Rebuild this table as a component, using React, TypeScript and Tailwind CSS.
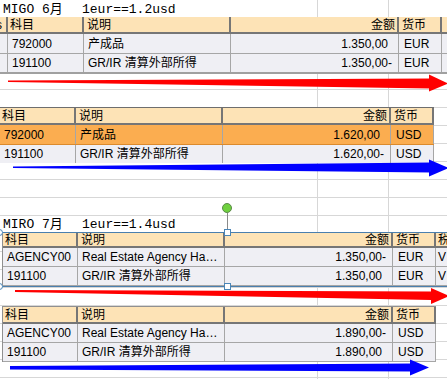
import React from 'react';

type Row = {
  acct: string;
  text: string;
  amount: string;
  neg?: boolean;
  cur: string;
  tax?: string;
  hl?: boolean;
};

const sans = "font-['Liberation_Sans','Noto_Sans_CJK_SC',sans-serif]";
const mono = "font-['Liberation_Mono','Noto_Sans_CJK_SC',monospace]";

const headDiv = 'shrink-0 border-r-2 border-[#767676] flex items-center';
const bodyDiv = 'shrink-0 border-r border-[#a6a6a6] flex items-center';

function Title({ left, right }: { left: string; right: string }) {
  return (
    <div className={`flex h-[17px] pt-[2px] pl-[3px] text-[13px] leading-[15px] text-black ${mono}`}>
      <span className="w-[79px] shrink-0 whitespace-pre">{left}</span>
      <span>{right}</span>
    </div>
  );
}

function Header({
  h,
  first,
  lead,
  tail,
}: {
  h: string;
  first: string;
  lead?: React.ReactNode;
  tail?: React.ReactNode;
}) {
  return (
    <div className={`flex ${h} bg-[#fde3b6] border-b-2 border-[#767676]`}>
      {lead}
      <div className={`${headDiv} ${first} pl-[2px]`}>科目</div>
      <div className={`${headDiv} w-[147px] pl-[3px]`}>说明</div>
      <div className={`${headDiv} w-[168px] justify-end pr-[2px]`}>金额</div>
      <div className={`${headDiv} w-[43px] pl-[3px]`}>货币</div>
      {tail}
    </div>
  );
}

function BodyRow({
  row,
  h,
  first,
  last,
  lead,
  tail,
}: {
  row: Row;
  h: string;
  first: string;
  last?: string;
  lead?: boolean;
  tail?: 'fill' | 'tax' | 'none';
}) {
  const bg = row.hl ? 'bg-[#fbad50]' : 'bg-[#efeff4]';
  const line = row.hl ? 'border-[#dc8a2c]' : 'border-[#a6a6a6]';
  return (
    <div className={`flex ${h} ${last ?? `border-b ${line}`}`}>
      {lead && <div className={`${bodyDiv} w-[8px] ${bg}`} />}
      <div className={`${bodyDiv} ${first} pl-[4px] ${bg}`}>{row.acct}</div>
      <div className={`${bodyDiv} w-[147px] pl-[4px] whitespace-nowrap overflow-hidden ${bg}`}>
        {row.text}
      </div>
      <div className={`${bodyDiv} w-[168px] justify-end pr-[6px] ${bg}`}>
        <span>{row.amount}</span>
        <span className="w-[4px]">{row.neg ? '-' : ''}</span>
      </div>
      <div className={`${bodyDiv} w-[43px] pl-[5px] ${bg}`}>{row.cur}</div>
      {tail === 'fill' && <div className={`flex-1 ${bg}`} />}
      {tail === 'tax' && <div className={`flex-1 flex items-center pl-[2px] ${bg}`}>{row.tax}</div>}
    </div>
  );
}

function Arrow({
  h,
  body,
  head,
  color,
}: {
  h: string;
  body: string;
  head: string;
  color: string;
}) {
  return (
    <svg className={`block w-[447px] ${h} overflow-visible`} width="447">
      <polygon points={body} fill={color} />
      <polygon points={head} fill={color} />
    </svg>
  );
}

const migoEur: Row[] = [
  { acct: '792000', text: '产成品', amount: '1.350,00', cur: 'EUR' },
  { acct: '191100', text: 'GR/IR 清算外部所得', amount: '1.350,00', neg: true, cur: 'EUR' },
];

const migoUsd: Row[] = [
  { acct: '792000', text: '产成品', amount: '1.620,00', cur: 'USD', hl: true },
  { acct: '191100', text: 'GR/IR 清算外部所得', amount: '1.620,00', neg: true, cur: 'USD' },
];

const miroEur: Row[] = [
  { acct: 'AGENCY00', text: 'Real Estate Agency Ha…', amount: '1.350,00', neg: true, cur: 'EUR', tax: 'V' },
  { acct: '191100', text: 'GR/IR 清算外部所得', amount: '1.350,00', cur: 'EUR', tax: 'V' },
];

const miroUsd: Row[] = [
  { acct: 'AGENCY00', text: 'Real Estate Agency Ha…', amount: '1.890,00', neg: true, cur: 'USD' },
  { acct: '191100', text: 'GR/IR 清算外部所得', amount: '1.890,00', cur: 'USD' },
];

export default function App() {
  return (
    <div className="relative w-[447px] h-[379px] overflow-hidden bg-white bg-[image:linear-gradient(to_right,transparent_317px,#d7d7d7_317px,#d7d7d7_318px,transparent_318px,transparent_388px,#d7d7d7_388px,#d7d7d7_389px,transparent_389px)]">
      <div className={`h-full bg-[image:repeating-linear-gradient(to_bottom,transparent_0px,transparent_17px,#d7d7d7_17px,#d7d7d7_18px)] text-[12px] leading-none text-black ${sans}`}>
        {/* MIGO */}
        <Title left="MIGO 6月" right="1eur==1.2usd" />
        <div className="w-[447px]">
          <Header
            h="h-[17px]"
            first="w-[76px]"
            lead={
              <div className={`${headDiv} w-[8px] overflow-hidden`}>
                <span className="-ml-[4px]">s</span>
              </div>
            }
            tail={<div className="flex-1" />}
          />
          <BodyRow row={migoEur[0]} h="h-[20px]" first="w-[76px]" lead tail="fill" />
          <BodyRow
            row={migoEur[1]}
            h="h-[20px]"
            first="w-[76px]"
            lead
            tail="fill"
            last="border-b-2 border-[#a0a0a0]"
          />
        </div>
        <Arrow
          h="h-[33px]"
          color="#ff0000"
          body="8,6.5 431,4.5 431,14.5 8,8"
          head="429,0.5 448,9.5 429,17.5"
        />

        <div className="w-[434px] border-t border-[#6e6e6e]">
          <Header h="h-[17px]" first="w-[76px]" />
          <BodyRow row={migoUsd[0]} h="h-[20px]" first="w-[76px]" />
          <BodyRow row={migoUsd[1]} h="h-[18px]" first="w-[76px]" last="" />
        </div>
        <Arrow
          h="h-[52px]"
          color="#0000ff"
          body="13,3.5 431,-0.5 431,9.5 13,5"
          head="429,-3.5 449,5 429,13.5"
        />

        {/* MIRO */}
        <Title left="MIRO 7月" right="1eur==1.4usd" />
        <div className="border-y border-[#4a7fae]">
          <div className="ml-[2px] border-l border-[#909090]">
            <Header
              h="h-[15px]"
              first="w-[75px]"
              tail={<div className="flex-1 flex items-center pl-[2px] overflow-hidden">税</div>}
            />
            <BodyRow row={miroEur[0]} h="h-[19px]" first="w-[75px]" tail="tax" />
            <BodyRow row={miroEur[1]} h="h-[19px]" first="w-[75px]" tail="tax" />
          </div>
        </div>
        <Arrow
          h="h-[19px]"
          color="#ff0000"
          body="15,3 431,4.5 431,13 15,5"
          head="431,1 449,9 431,17"
        />

        <div className="ml-[2px] w-[434px] border-t border-l border-[#909090]">
          <Header h="h-[17px]" first="w-[75px]" />
          <BodyRow row={miroUsd[0]} h="h-[19px]" first="w-[75px]" />
          <BodyRow row={miroUsd[1]} h="h-[19px]" first="w-[75px]" />
        </div>
        <Arrow
          h="h-[17px]"
          color="#0000ff"
          body="10,4 412,1.5 412,9.5 10,7.5"
          head="410,-2.5 429,5.5 410,13.5"
        />
      </div>

      {/* selection handles on the MIRO table */}
      <div className="absolute left-[222px] top-[203px] w-[10px] h-[10px] rounded-full bg-[#6fd13f] border border-[#5c8a4a]" />
      <div className="absolute left-[227px] top-[213px] w-px h-[17px] bg-[#8a8a8a]" />
      <div className="absolute left-[224px] top-[229px] w-[7px] h-[7px] bg-white border border-[#4a86b8]" />
      <div className="absolute left-[224px] top-[283px] w-[7px] h-[7px] bg-white border border-[#4a86b8]" />
      <div className="absolute -left-[4px] top-[229px] w-[7px] h-[7px] rounded-full bg-white border border-[#4a86b8]" />
      <div className="absolute -left-[4px] top-[283px] w-[7px] h-[7px] rounded-full bg-white border border-[#4a86b8]" />
    </div>
  );
}
